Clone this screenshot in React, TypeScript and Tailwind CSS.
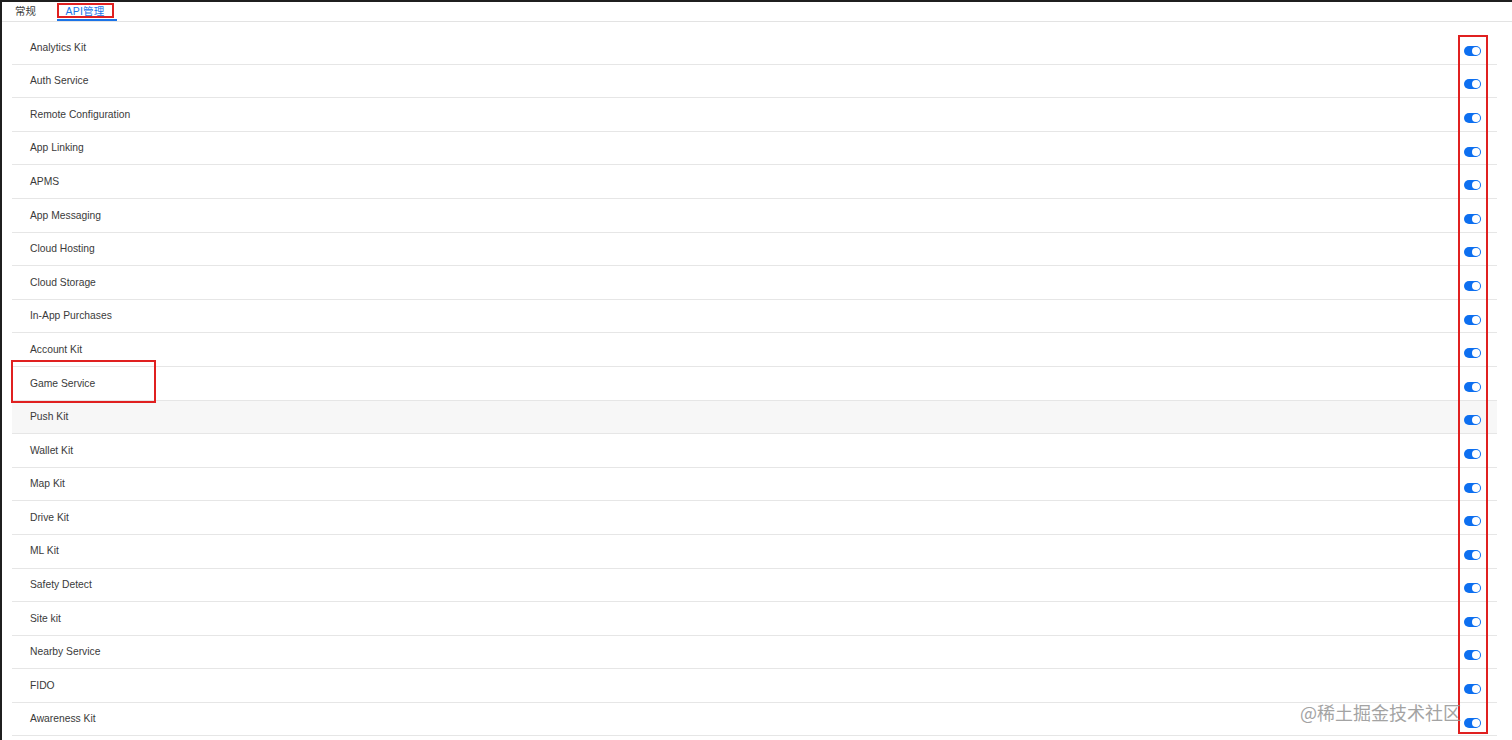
import React from "react";

const services = [
  "Analytics Kit",
  "Auth Service",
  "Remote Configuration",
  "App Linking",
  "APMS",
  "App Messaging",
  "Cloud Hosting",
  "Cloud Storage",
  "In-App Purchases",
  "Account Kit",
  "Game Service",
  "Push Kit",
  "Wallet Kit",
  "Map Kit",
  "Drive Kit",
  "ML Kit",
  "Safety Detect",
  "Site kit",
  "Nearby Service",
  "FIDO",
  "Awareness Kit",
];

function Toggle() {
  return (
    <span className="mt-[7px] flex h-[10px] w-[17px] items-center justify-end rounded-full bg-[#0d6ff0] pr-[1px]">
      <span className="h-[8px] w-[8px] rounded-full bg-white" />
    </span>
  );
}

export default function App() {
  return (
    <div
      className="relative h-[740px] w-[1512px] overflow-hidden border-l-2 border-t-2 border-[#1f1f1f] bg-white text-[#3a3a3a]"
      style={{ fontFamily: '"Liberation Sans", Arial, "Noto Sans CJK SC", sans-serif' }}
    >
      {/* tabs */}
      <div className="flex h-[20px] items-stretch border-b border-[#e3e3e3] pl-[13px] text-[10.5px]">
        <div className="flex w-[42px] items-center">常规</div>
        <div className="flex w-[60px] items-center justify-center border-b-2 border-[#1a73e8] pt-[2px] text-[#1a73e8]">
          <span className="-ml-[4px] tracking-[0.2px]">API管理</span>
        </div>
      </div>

      {/* rows */}
      <div className="ml-[10px] mr-[15px] mt-[9px]">
        {services.map((name) => (
          <div
            key={name}
            className={
              "flex h-[33.6px] items-center justify-between border-b border-[#e6e6e6] pl-[18px] pr-[16px] text-[10.3px] " +
              (name === "Push Kit" ? "bg-[#f7f7f7]" : "")
            }
          >
            <span>{name}</span>
            <Toggle />
          </div>
        ))}
      </div>

      {/* annotations */}
      <div className="absolute left-[55px] top-[1px] h-[15px] w-[57px] border-2 border-[#e02020]" />
      <div className="absolute left-[9px] top-[358px] h-[43px] w-[145px] border-2 border-[#e02020]" />
      <div className="absolute left-[1456px] top-[33px] h-[699px] w-[30px] border-2 border-[#e02020]" />

      <div
        className="pointer-events-none absolute left-[1298px] top-[697px] text-[18px] text-[#9a9a9a] opacity-90"
        style={{ fontFamily: '"Noto Sans CJK SC", sans-serif' }}
      >
        @稀土掘金技术社区
      </div>
    </div>
  );
}
